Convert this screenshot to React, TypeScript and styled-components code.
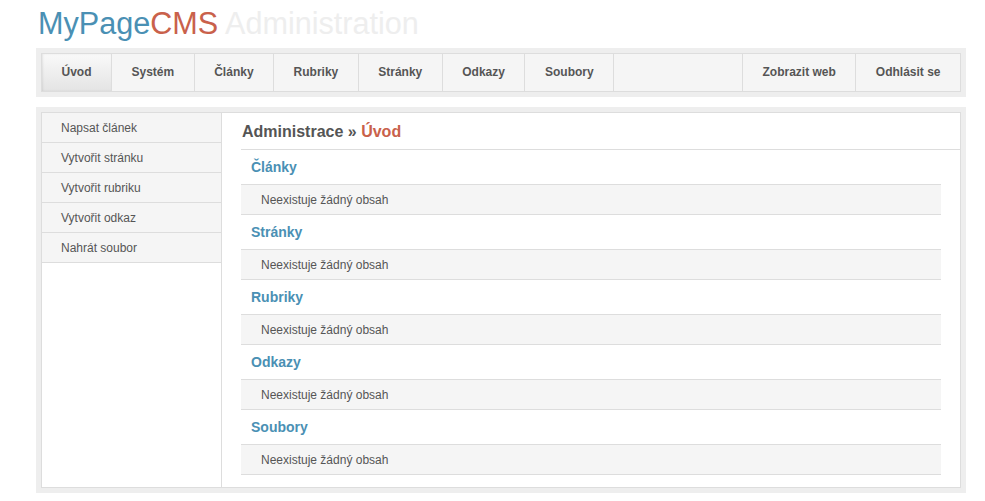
import React from 'react';
import styled, { createGlobalStyle, css } from 'styled-components';

const COLORS = {
  frame: '#eeeeee',
  border: '#dddddd',
  panel: '#f5f5f5',
  text: '#555555',
  blue: '#4a90b4',
  red: '#c9614b',
  faint: '#eeeeee',
};

const GlobalStyle = createGlobalStyle`
  body {
    margin: 0;
    background: #fff;
    font-family: "Liberation Sans", Arial, sans-serif;
    color: ${COLORS.text};
  }
`;

const Page = styled.div`
  width: 930px;
  padding-left: 36px;
`;

const Logo = styled.h1`
  margin: 0;
  padding: 6px 0 0 2px;
  font-size: 30.6px;
  line-height: 34px;
  font-weight: normal;
  color: ${COLORS.blue};
`;

const LogoPart = styled.span<{ $tone: 'red' | 'faint' }>`
  color: ${({ $tone }) => ($tone === 'red' ? COLORS.red : COLORS.faint)};
`;

const Frame = styled.div`
  background: ${COLORS.frame};
  padding: 5px;
  margin-top: 8px;

  & + & {
    margin-top: 10px;
  }
`;

const NavBar = styled.nav`
  display: flex;
  border: 1px solid ${COLORS.border};
  background: ${COLORS.panel};
`;

const NavItem = styled.a<{ $active?: boolean; $right?: boolean }>`
  padding: 0 19.5px;
  line-height: 37px;
  font-size: 12px;
  font-weight: bold;
  color: ${COLORS.text};
  text-decoration: none;
  white-space: nowrap;
  ${({ $right }) =>
    $right
      ? css`border-left: 1px solid ${COLORS.border};`
      : css`border-right: 1px solid ${COLORS.border};`}
  ${({ $active }) =>
    $active &&
    css`
      background: linear-gradient(#f9f9f9, #e4e4e4);
      box-shadow: inset 1px 0 2px rgba(0, 0, 0, 0.08);
    `}
`;

const NavSpacer = styled.div`
  flex: 1;
`;

const Box = styled.div`
  display: flex;
  border: 1px solid ${COLORS.border};
  background: #fff;
`;

const Sidebar = styled.ul`
  width: 179px;
  margin: 0;
  padding: 0;
  list-style: none;
  border-right: 1px solid ${COLORS.border};
`;

const SideItem = styled.li`
  padding: 2px 0 0 19px;
  line-height: 27px;
  font-size: 12px;
  background: ${COLORS.panel};
  border-bottom: 1px solid ${COLORS.border};
`;

const Main = styled.main`
  flex: 1;
  padding: 0 0 12px 19px;
`;

const Heading = styled.h2`
  margin: 0;
  padding: 9px 1px 7px;
  font-size: 16px;
  line-height: 20px;
  font-weight: bold;
  color: ${COLORS.text};
  border-bottom: 1px solid ${COLORS.border};
`;

const Current = styled.span`
  color: ${COLORS.red};
`;

const Sections = styled.div`
  margin-right: 19px;
`;

const SectionTitle = styled.h3`
  margin: 0;
  padding-left: 10px;
  font-size: 14px;
  line-height: 34px;
  font-weight: bold;
  color: ${COLORS.blue};
`;

const EmptyRow = styled.div`
  padding: 2px 0 0 20px;
  line-height: 27px;
  font-size: 12px;
  background: ${COLORS.panel};
  border-top: 1px solid ${COLORS.border};
  border-bottom: 1px solid ${COLORS.border};
`;

const menu = ['Úvod', 'Systém', 'Články', 'Rubriky', 'Stránky', 'Odkazy', 'Soubory'];
const actions = ['Napsat článek', 'Vytvořit stránku', 'Vytvořit rubriku', 'Vytvořit odkaz', 'Nahrát soubor'];
const sections = ['Články', 'Stránky', 'Rubriky', 'Odkazy', 'Soubory'];

export default function App() {
  return (
    <>
      <GlobalStyle />
      <Page>
        <Logo>
          MyPage<LogoPart $tone="red">CMS</LogoPart> <LogoPart $tone="faint">Administration</LogoPart>
        </Logo>

        <Frame>
          <NavBar>
            {menu.map((item, i) => (
              <NavItem key={item} $active={i === 0}>
                {item}
              </NavItem>
            ))}
            <NavSpacer />
            <NavItem $right>Zobrazit web</NavItem>
            <NavItem $right>Odhlásit se</NavItem>
          </NavBar>
        </Frame>

        <Frame>
          <Box>
            <Sidebar>
              {actions.map((a) => (
                <SideItem key={a}>{a}</SideItem>
              ))}
            </Sidebar>
            <Main>
              <Heading>
                Administrace » <Current>Úvod</Current>
              </Heading>
              <Sections>
                {sections.map((s) => (
                  <React.Fragment key={s}>
                    <SectionTitle>{s}</SectionTitle>
                    <EmptyRow>Neexistuje žádný obsah</EmptyRow>
                  </React.Fragment>
                ))}
              </Sections>
            </Main>
          </Box>
        </Frame>
      </Page>
    </>
  );
}
